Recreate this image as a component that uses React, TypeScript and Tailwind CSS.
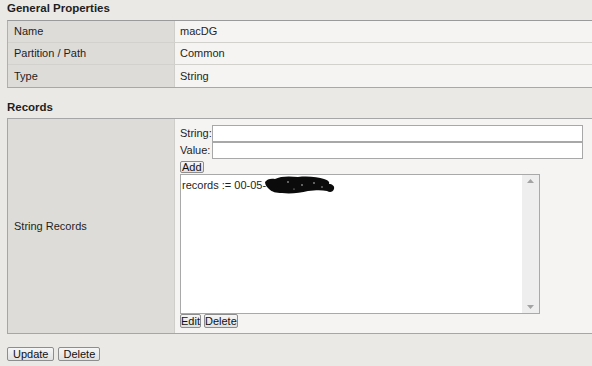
import React from "react";

const Row = ({ label, value, last }: { label: string; value: string; last?: boolean }) => (
  <div className={`grid h-[22px] grid-cols-[167px_1fr] ${last ? "" : "border-b border-[#d2d1ce]"}`}>
    <div className="flex items-center border-r border-[#cfcecb] bg-[#dedcd9] pl-[6px]">{label}</div>
    <div className="flex items-center bg-[#f5f4f2] pl-[5px]">{value}</div>
  </div>
);

const Btn = ({ children, h = "h-[14px]", px = "px-[1px]" }: { children: React.ReactNode; h?: string; px?: string }) => (
  <button
    className={`flex items-center rounded-[2px] border border-[#8d8d8d] bg-gradient-to-b from-[#f6f6f6] to-[#e0e0e0] leading-none text-[#111] ${h} ${px}`}
  >
    {children}
  </button>
);

export default function App() {
  return (
    <div className="h-[366px] w-[592px] overflow-hidden bg-[#eae9e6] pl-[7px] font-['Liberation_Sans',Arial,sans-serif] text-[11px] text-[#1e1e1e]">
      <div className="flex h-[20px] items-center pb-[2px] text-[11.5px] font-bold">General Properties</div>
      <div className="border-y border-l border-t-[#9a9a9a] border-b-[#a8a8a8] border-l-[#b0b0b0]">
        <Row label="Name" value="macDG" />
        <Row label="Partition / Path" value="Common" />
        <Row label="Type" value="String" last />
      </div>

      <div className="flex h-[30px] items-center pt-[10px] text-[11.5px] font-bold">Records</div>
      <div className="grid h-[216px] grid-cols-[167px_1fr] border-y border-l border-[#a6a6a6]">
        <div className="flex items-center border-r border-[#cfcecb] bg-[#dedcd9] pl-[6px]">String Records</div>
        <div className="flex flex-col bg-[#f5f4f2] pl-[5px] pt-[6px]">
          <div className="flex h-[17px] items-center pr-[9px]">
            <span className="w-[32px] shrink-0 whitespace-nowrap">String:</span>
            <input className="h-[17px] min-w-0 flex-1 border border-[#a8a8a8] bg-white outline-none" />
          </div>
          <div className="flex h-[17px] items-center pr-[9px]">
            <span className="w-[32px] shrink-0 whitespace-nowrap">Value:</span>
            <input className="h-[17px] min-w-0 flex-1 border border-[#a8a8a8] bg-white outline-none" />
          </div>
          <div className="mt-[2px] flex">
            <Btn h="h-[12px]">Add</Btn>
          </div>
          <div className="mt-[1px] flex h-[140px] w-[360px] border border-[#a9a9a9] bg-white">
            <div className="relative flex-1 pl-[1px] pt-[2px]">
              <span>records := 00-05-</span>
              <svg className="absolute left-[83px] top-[1px]" width="72" height="18" viewBox="0 0 72 18">
                <path
                  d="M1 6 C3 3 7 2 11 3 C16 0 26 0 34 1 C44 0 54 1 60 3 C64 4 66 6 65 8 C68 8 71 10 70 13 C69 16 66 17 63 15 C58 14 52 14 44 15 C36 17 26 18 18 17 C12 17 8 16 5 13 C3 11 1 9 1 6 Z"
                  fill="#0b0b0b"
                />
                <circle cx="24" cy="6" r="0.8" fill="#ccc" />
                <circle cx="38" cy="9" r="0.8" fill="#ccc" />
                <circle cx="50" cy="7" r="0.8" fill="#ccc" />
                <circle cx="58" cy="11" r="0.7" fill="#ccc" />
                <circle cx="30" cy="13" r="0.6" fill="#ccc" />
              </svg>
            </div>
            <div className="flex w-[17px] flex-col items-center justify-between bg-[#eeeeee] py-[4px]">
              <svg width="7" height="4" viewBox="0 0 7 4"><path d="M0 4 L3.5 0 L7 4 Z" fill="#a3a3a3" /></svg>
              <svg width="7" height="4" viewBox="0 0 7 4"><path d="M0 0 L3.5 4 L7 0 Z" fill="#a3a3a3" /></svg>
            </div>
          </div>
          <div className="flex gap-[3px]">
            <Btn px="px-0">Edit</Btn>
            <Btn px="px-0">Delete</Btn>
          </div>
        </div>
      </div>

      <div className="mt-[13px] flex gap-[4px]">
        <Btn h="h-[14px]" px="px-[5px]">Update</Btn>
        <Btn h="h-[14px]" px="px-[4px]">Delete</Btn>
      </div>
    </div>
  );
}
